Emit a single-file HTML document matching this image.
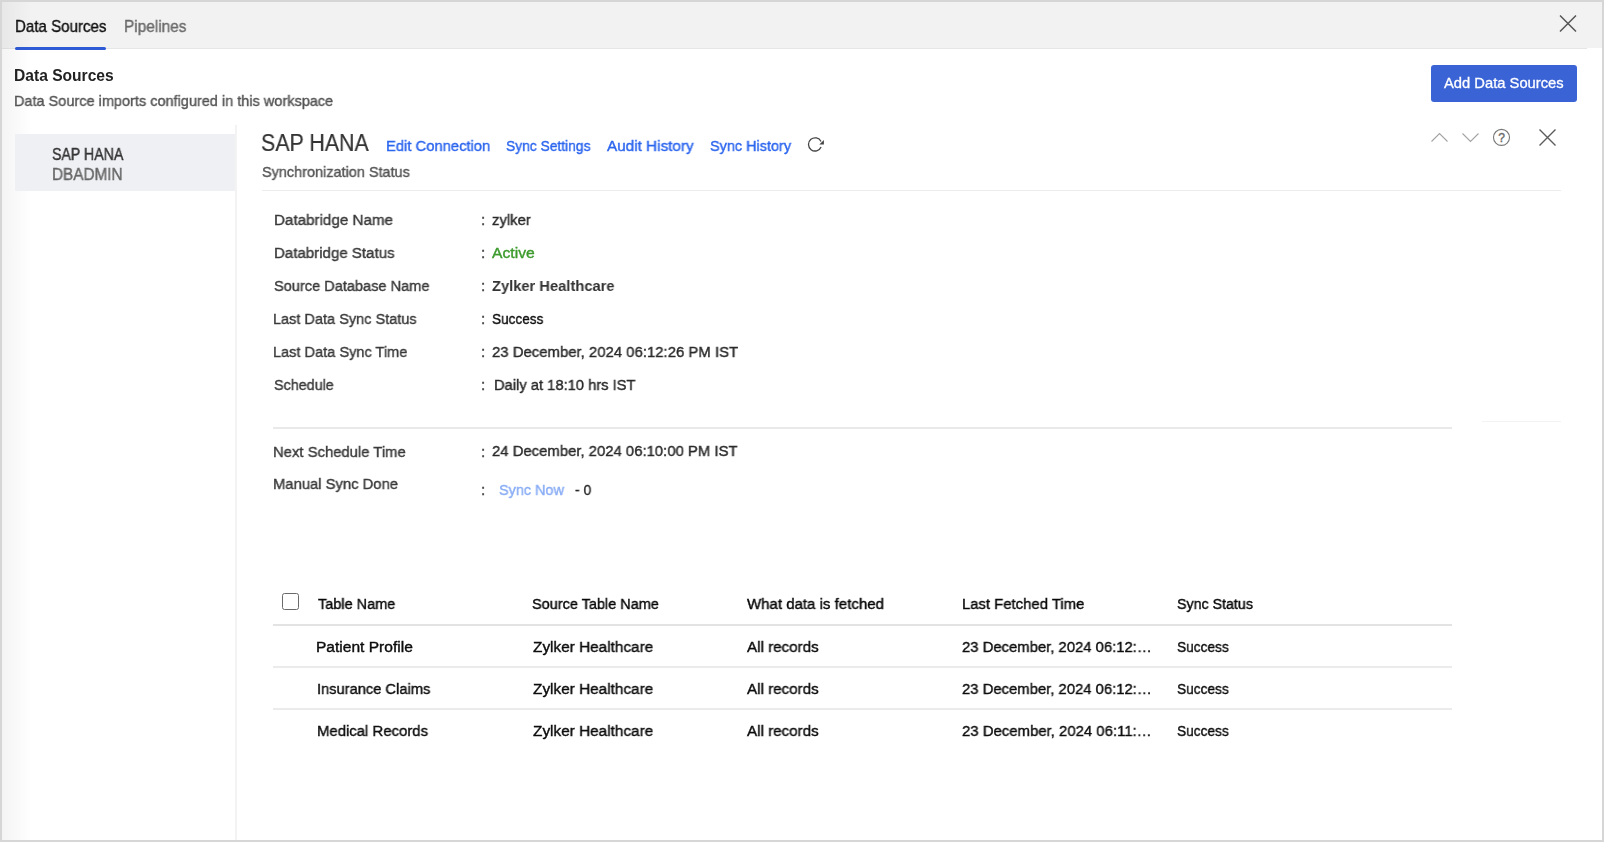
<!DOCTYPE html>
<html><head><meta charset="utf-8"><style>
html,body{margin:0;padding:0;}
body{width:1604px;height:842px;overflow:hidden;background:#d6d6d6;position:relative;font-family:"Liberation Sans", sans-serif;}
.frame{position:absolute;left:2px;top:2px;width:1600px;height:838px;background:#fff;overflow:hidden;}
.abs{position:absolute;}
.t{position:absolute;white-space:nowrap;line-height:1;font-family:"Liberation Sans", sans-serif;-webkit-text-stroke:0.4px currentColor;will-change:transform;transform-origin:0 0;}
</style></head><body>
<div class="frame"></div>
<!-- tab bar -->
<div class="abs" style="left:2px;top:2px;width:1600px;height:46px;background:#f2f2f2;"></div>
<div class="abs" style="left:2px;top:48px;width:1585px;height:1px;background:#e6e6e6;"></div>
<div class="abs" style="left:14.7px;top:46.7px;width:91.5px;height:3px;background:#2e5ad6;border-radius:2px;"></div>
<!-- left shade -->
<div class="abs" style="left:2px;top:2px;width:30px;height:838px;background:linear-gradient(to right,rgba(0,0,0,0.045),rgba(0,0,0,0));"></div>
<!-- top close -->
<svg class="abs" style="left:1558px;top:14px" width="20" height="20" viewBox="0 0 20 20"><path d="M2 1.5 L18 17.5 M18 1.5 L2 17.5" stroke="#555" stroke-width="1.5" fill="none"/></svg>
<!-- button -->
<div class="abs" style="left:1431px;top:65px;width:146px;height:37px;background:#3a63d6;border-radius:3px;"></div>
<!-- list item -->
<div class="abs" style="left:15px;top:134px;width:221px;height:57px;background:#eff0f4;"></div>
<!-- vertical divider -->
<div class="abs" style="left:235px;top:125px;width:2px;height:715px;background:#f3f3f3;"></div>
<!-- hr under title -->
<div class="abs" style="left:262px;top:190px;width:1299px;height:1px;background:#ececec;"></div>
<!-- right icons -->
<svg class="abs" style="left:1425px;top:125px" width="145" height="25" viewBox="0 0 145 25">
  <path d="M6.5 16.5 L14.5 8.5 L22.5 16.5" stroke="#a3a3a3" stroke-width="1.1" fill="none"/>
  <path d="M37.5 8.5 L45.5 16.5 L53.5 8.5" stroke="#a3a3a3" stroke-width="1.1" fill="none"/>
  <circle cx="76.5" cy="12.4" r="8" stroke="#777" stroke-width="1.1" fill="none"/>
  <text x="76.5" y="17" text-anchor="middle" font-family="Liberation Sans" font-size="12" fill="#6a6a6a" stroke="#6a6a6a" stroke-width="0.4">?</text>
  <path d="M114.5 4.5 L130.5 20.5 M130.5 4.5 L114.5 20.5" stroke="#5c5c5c" stroke-width="1.4" fill="none"/>
</svg>
<!-- refresh icon -->
<svg class="abs" style="left:800px;top:130px" width="32" height="30" viewBox="0 0 32 30">
  <path d="M21.03 11.51 A6.6 6.6 0 1 0 21.13 17.08" stroke="#444" stroke-width="1.3" fill="none"/>
  <path d="M23.9 10.0 L19.3 14.6 L23.9 14.6 Z" fill="#444"/>
</svg>
<!-- hr mid -->
<div class="abs" style="left:273px;top:427px;width:1179px;height:2px;background:#e9e9e9;"></div>
<div class="abs" style="left:1482px;top:421px;width:79px;height:1px;background:#f3f3f3;"></div>
<!-- checkbox -->
<div class="abs" style="left:282.2px;top:593px;width:14.6px;height:14.6px;border:1px solid #6a6a6a;border-radius:2.5px;"></div>
<!-- table lines -->
<div class="abs" style="left:273px;top:624px;width:1179px;height:2px;background:#e3e3e3;"></div>
<div class="abs" style="left:273px;top:666px;width:1179px;height:1.5px;background:#ebebeb;"></div>
<div class="abs" style="left:273px;top:708px;width:1179px;height:1.5px;background:#ebebeb;"></div>
<div class="t" style="left:14.62px;top:19.20px;font-size:16.6px;color:#111;transform:scaleX(0.9091);">Data Sources</div>
<div class="t" style="left:123.56px;top:19.20px;font-size:16.6px;color:#6b6b6b;transform:scaleX(0.9274);">Pipelines</div>
<div class="t" style="left:14.00px;top:68.30px;font-size:15.6px;color:#222;font-weight:700;transform:scaleX(0.9960);-webkit-text-stroke-width:0px;">Data Sources</div>
<div class="t" style="left:14.03px;top:93.40px;font-size:15.0px;color:#555;transform:scaleX(0.9666);">Data Source imports configured in this workspace</div>
<div class="t" style="left:51.57px;top:146.30px;font-size:16.2px;color:#333;transform:scaleX(0.8757);">SAP HANA</div>
<div class="t" style="left:52.06px;top:167.00px;font-size:16.0px;color:#666;transform:scaleX(0.9556);">DBADMIN</div>
<div class="t" style="left:261.07px;top:131.20px;font-size:24.2px;color:#333;transform:scaleX(0.8840);-webkit-text-stroke-width:0.2px;">SAP HANA</div>
<div class="t" style="left:385.71px;top:138.30px;font-size:15.4px;color:#2b65ee;transform:scaleX(0.9595);">Edit Connection</div>
<div class="t" style="left:505.51px;top:138.30px;font-size:15.4px;color:#2b65ee;transform:scaleX(0.8980);">Sync Settings</div>
<div class="t" style="left:606.99px;top:138.30px;font-size:15.4px;color:#2b65ee;transform:scaleX(0.9933);">Audit History</div>
<div class="t" style="left:709.97px;top:138.30px;font-size:15.4px;color:#2b65ee;transform:scaleX(0.9380);">Sync History</div>
<div class="t" style="left:262.00px;top:164.40px;font-size:15.0px;color:#555;transform:scaleX(0.9634);">Synchronization Status</div>
<div class="t" style="left:273.51px;top:212.30px;font-size:15.4px;color:#3a3a3a;transform:scaleX(0.9866);">Databridge Name</div>
<div class="t" style="left:273.52px;top:245.40px;font-size:15.4px;color:#3a3a3a;transform:scaleX(0.9787);">Databridge Status</div>
<div class="t" style="left:274.00px;top:278.10px;font-size:15.4px;color:#3a3a3a;transform:scaleX(0.9464);">Source Database Name</div>
<div class="t" style="left:273.06px;top:311.40px;font-size:15.4px;color:#3a3a3a;transform:scaleX(0.9431);">Last Data Sync Status</div>
<div class="t" style="left:273.05px;top:344.40px;font-size:15.4px;color:#3a3a3a;transform:scaleX(0.9461);">Last Data Sync Time</div>
<div class="t" style="left:274.00px;top:376.80px;font-size:15.4px;color:#3a3a3a;transform:scaleX(0.9313);">Schedule</div>
<div class="t" style="left:273.04px;top:443.70px;font-size:15.4px;color:#3a3a3a;transform:scaleX(0.9635);">Next Schedule Time</div>
<div class="t" style="left:273.04px;top:475.60px;font-size:15.4px;color:#3a3a3a;transform:scaleX(0.9612);">Manual Sync Done</div>
<div class="t" style="left:481.00px;top:212.30px;font-size:15.4px;color:#444;">:</div>
<div class="t" style="left:481.00px;top:245.40px;font-size:15.4px;color:#444;">:</div>
<div class="t" style="left:481.00px;top:278.10px;font-size:15.4px;color:#444;">:</div>
<div class="t" style="left:481.00px;top:311.40px;font-size:15.4px;color:#444;">:</div>
<div class="t" style="left:481.00px;top:344.40px;font-size:15.4px;color:#444;">:</div>
<div class="t" style="left:481.00px;top:376.80px;font-size:15.4px;color:#444;">:</div>
<div class="t" style="left:481.00px;top:443.70px;font-size:15.4px;color:#444;">:</div>
<div class="t" style="left:481.00px;top:481.90px;font-size:15.4px;color:#444;">:</div>
<div class="t" style="left:491.51px;top:212.30px;font-size:15.4px;color:#2a2a2a;transform:scaleX(0.9655);">zylker</div>
<div class="t" style="left:491.50px;top:245.40px;font-size:15.4px;color:#3c9a2c;transform:scaleX(1.0192);">Active</div>
<div class="t" style="left:491.50px;top:278.10px;font-size:15.4px;color:#333;font-weight:700;transform:scaleX(0.9547);-webkit-text-stroke-width:0px;">Zylker Healthcare</div>
<div class="t" style="left:491.51px;top:311.40px;font-size:15.4px;color:#0c0c0c;transform:scaleX(0.8829);">Success</div>
<div class="t" style="left:491.50px;top:344.40px;font-size:15.4px;color:#2a2a2a;transform:scaleX(0.9685);">23 December, 2024 06:12:26 PM IST</div>
<div class="t" style="left:493.55px;top:376.80px;font-size:15.4px;color:#2a2a2a;transform:scaleX(0.9565);">Daily at 18:10 hrs IST</div>
<div class="t" style="left:492.00px;top:442.70px;font-size:15.4px;color:#2a2a2a;transform:scaleX(0.9662);">24 December, 2024 06:10:00 PM IST</div>
<div class="t" style="left:499.03px;top:481.90px;font-size:15.4px;color:#88acf5;transform:scaleX(0.9372);">Sync Now</div>
<div class="t" style="left:574.54px;top:481.90px;font-size:15.4px;color:#2a2a2a;transform:scaleX(0.9011);">- 0</div>
<div class="t" style="left:317.50px;top:596.00px;font-size:15.4px;color:#080808;transform:scaleX(0.9415);">Table Name</div>
<div class="t" style="left:532.48px;top:596.00px;font-size:15.4px;color:#080808;transform:scaleX(0.9408);">Source Table Name</div>
<div class="t" style="left:747.00px;top:596.00px;font-size:15.4px;color:#080808;transform:scaleX(0.9758);">What data is fetched</div>
<div class="t" style="left:961.53px;top:596.00px;font-size:15.4px;color:#080808;transform:scaleX(0.9664);">Last Fetched Time</div>
<div class="t" style="left:1177.02px;top:596.00px;font-size:15.4px;color:#080808;transform:scaleX(0.9245);">Sync Status</div>
<div class="t" style="left:316.49px;top:639.25px;font-size:15.4px;color:#0c0c0c;transform:scaleX(1.0106);">Patient Profile</div>
<div class="t" style="left:532.50px;top:639.25px;font-size:15.4px;color:#0c0c0c;transform:scaleX(0.9967);">Zylker Healthcare</div>
<div class="t" style="left:747.00px;top:639.25px;font-size:15.4px;color:#0c0c0c;transform:scaleX(0.9863);">All records</div>
<div class="t" style="left:962.00px;top:639.25px;font-size:15.4px;color:#0c0c0c;transform:scaleX(0.9641);">23 December, 2024 06:12:…</div>
<div class="t" style="left:1177.04px;top:639.25px;font-size:15.4px;color:#0c0c0c;transform:scaleX(0.8897);">Success</div>
<div class="t" style="left:316.55px;top:681.10px;font-size:15.4px;color:#0c0c0c;transform:scaleX(0.9526);">Insurance Claims</div>
<div class="t" style="left:532.50px;top:681.10px;font-size:15.4px;color:#0c0c0c;transform:scaleX(0.9967);">Zylker Healthcare</div>
<div class="t" style="left:747.00px;top:681.10px;font-size:15.4px;color:#0c0c0c;transform:scaleX(0.9863);">All records</div>
<div class="t" style="left:962.00px;top:681.10px;font-size:15.4px;color:#0c0c0c;transform:scaleX(0.9641);">23 December, 2024 06:12:…</div>
<div class="t" style="left:1177.04px;top:681.10px;font-size:15.4px;color:#0c0c0c;transform:scaleX(0.8897);">Success</div>
<div class="t" style="left:316.54px;top:723.10px;font-size:15.4px;color:#0c0c0c;transform:scaleX(0.9684);">Medical Records</div>
<div class="t" style="left:532.50px;top:723.10px;font-size:15.4px;color:#0c0c0c;transform:scaleX(0.9967);">Zylker Healthcare</div>
<div class="t" style="left:747.00px;top:723.10px;font-size:15.4px;color:#0c0c0c;transform:scaleX(0.9863);">All records</div>
<div class="t" style="left:962.00px;top:723.10px;font-size:15.4px;color:#0c0c0c;transform:scaleX(0.9691);">23 December, 2024 06:11:…</div>
<div class="t" style="left:1177.04px;top:723.10px;font-size:15.4px;color:#0c0c0c;transform:scaleX(0.8897);">Success</div>
<div class="t" style="left:1444.00px;top:76.10px;font-size:14.6px;color:#fff;transform:scaleX(1.0102);-webkit-text-stroke-width:0.3px;">Add Data Sources</div>
</body></html>
